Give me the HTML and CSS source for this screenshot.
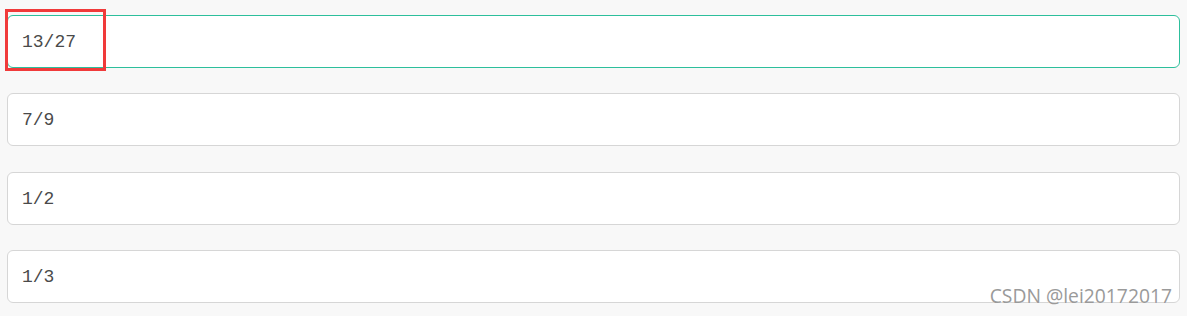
FILE: index.html
```
<!DOCTYPE html>
<html lang="en">
  <head>
    <meta charset="UTF-8" />
    <meta name="viewport" content="width=device-width, initial-scale=1.0" />
    <link rel="stylesheet" href="styles.css">
    <title>Fractions</title>
  </head>
  <body>
    <main class="list">
      <div class="field active">13/27</div>
      <div class="field">7/9</div>
      <div class="field">1/2</div>
      <div class="field">1/3</div>
    </main>

    <!-- annotation box over the first field -->
    <div class="highlight"></div>
    <div class="watermark">CSDN @lei20172017</div>
  </body>
</html>
```

FILE: styles.css
```
* {
  margin: 0;
  padding: 0;
  box-sizing: border-box;
}

body {
  background: #f8f8f8;
  font-family: "Liberation Mono", "Courier New", monospace;
  height: 316px;
  overflow: hidden;
  position: relative;
}

.list {
  display: flex;
  flex-direction: column;
  gap: 25.3px;
  padding: 15px 7px 0 7px;
}

.field {
  height: 53px;
  display: flex;
  align-items: center;
  padding-left: 14px;
  padding-top: 1px;
  background: #ffffff;
  border: 1px solid #d6d6d6;
  border-radius: 6px;
  font-size: 18px;
  color: #4a4a4a;
}

.field.active {
  border-color: #2dbf9c;
}

.highlight {
  position: absolute;
  left: 5px;
  top: 9px;
  width: 101px;
  height: 62px;
  border: 3px solid #f03a3a;
}

.watermark {
  position: absolute;
  right: 15px;
  top: 282px;
  font-family: "Open Sans", "Noto Sans", sans-serif;
  font-size: 19.3px;
  color: #9a9a9a;
  text-shadow: 0 0 1px #ffffff;
}
```
